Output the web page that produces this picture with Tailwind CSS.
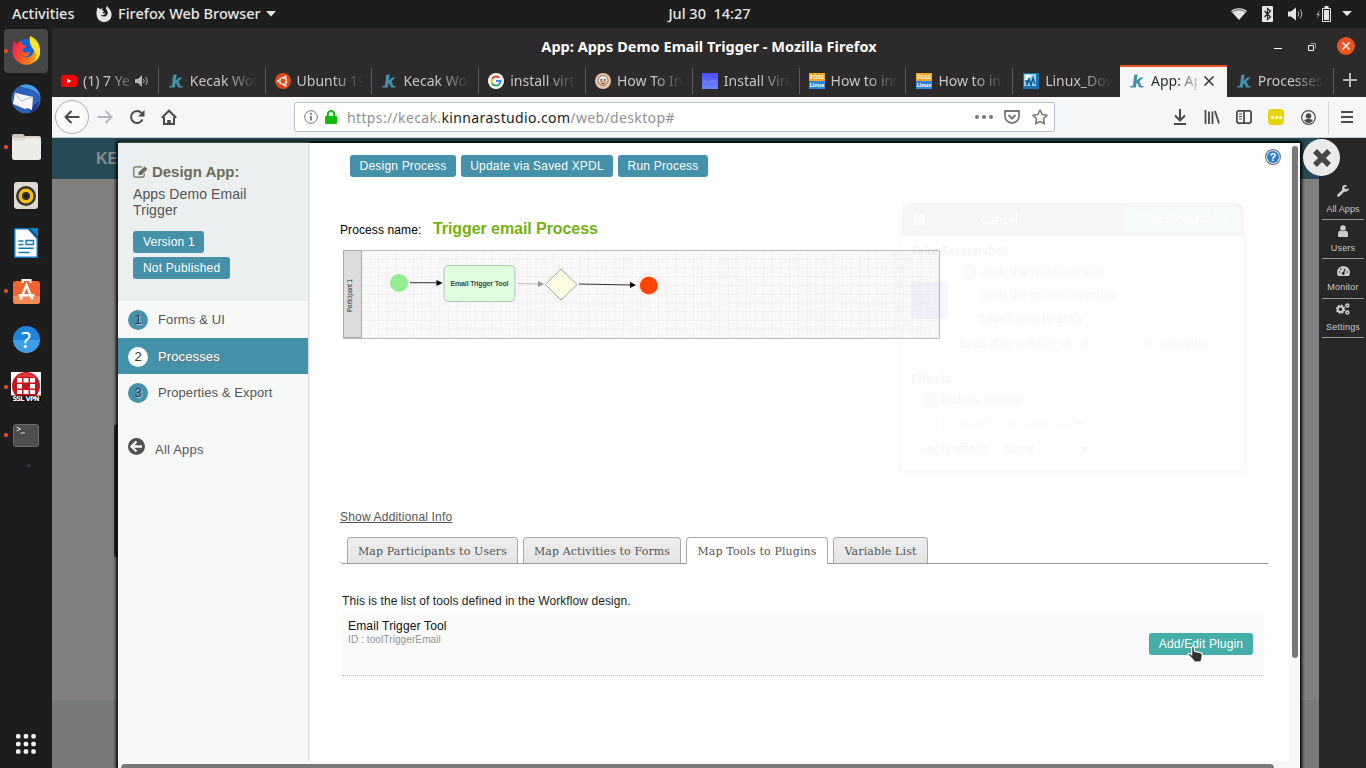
<!DOCTYPE html>
<html lang="en">
<head>
<meta charset="utf-8">
<title>App: Apps Demo Email Trigger</title>
<script src="https://cdn.jsdelivr.net/npm/@tailwindcss/browser@4"></script>
</head>
<body class="w-[1366px] h-[768px] overflow-hidden bg-[#1d1d1d] font-['Noto_Sans',sans-serif] flex flex-col">
<svg class="hidden">
  <symbol id="k" viewBox="0 0 14 14"><path fill="#4591a9" d="M4.200 1 7.800.2 6.600 6.400 10.200 3.400h3.400L9.500 7.300l2 4.700H13.500v1.500H9.300L7 9l-.6.500-.4 4H0l.3-1.200 2.700-.8z"/></symbol>
  <symbol id="foss" viewBox="0 0 16 16"><path fill="#fba51c" d="M0 0h16v8H0z"/><path fill="#2a86e0" d="M0 8h16v8H0z"/><text x="8" y="6.200" font-size="5.500" font-weight="700" fill="#fff" text-anchor="middle" font-family="Noto Sans">FOSS</text><text x="8" y="14" font-size="5.500" font-weight="700" fill="#fff" text-anchor="middle" font-family="Noto Sans">Linux</text></symbol>
</svg>

<!-- Desktop top bar -->
<header class="h-[27px] shrink-0 grid grid-cols-[1fr_auto_1fr] items-center text-[#e6e6e6] text-[14.5px] leading-[26px] font-medium">
  <div class="flex items-center pl-3">
    <span class="w-[64px] pb-px">Activities</span>
    <svg class="ml-5 w-4 h-4" viewBox="0 0 16 16"><path fill="#e6e6e6" d="M1.500 1.500 4 3c1-.6 2-.7 3-.5C5.800 3.200 6 4 6.200 4.500l2 .4c-.3 1-1.200 1.200-1.700 1.700.4 1 2 1.200 3 .4-.5 2-3 2.800-4.800 1.500 1.300 3 6.300 2.800 7-1 .4-2.500-1-3.500-1.500-4.500-.3-1 .2-2.200 1-3C12 1.800 15.600 4 15.600 8.400a7.500 7.500 0 0 1-15 .4C.3 6 .8 3.500 1.500 1.500Z"/></svg>
    <span class="ml-[6px] w-[143px] whitespace-nowrap pb-px">Firefox Web Browser</span>
    <svg class="ml-[5px] w-[10px] h-[6px]" viewBox="0 0 10 6"><path fill="#e6e6e6" d="M0 0h10L5 5.500z"/></svg>
  </div>
  <div class="text-center whitespace-pre pl-[53px] pb-px">Jul 30  14:27</div>
  <div class="flex items-center justify-end pr-[14px]">
    <svg class="w-4 h-3" viewBox="0 0 16 12"><path fill="#e6e6e6" d="M0 3C4-.8 12-.8 16 3L8 12z"/><path d="M1.200 4C5 1.200 11 1.200 14.800 4" stroke="#555" fill="none"/></svg>
    <svg class="ml-[15px] w-[11px] h-4" viewBox="0 0 11 16"><rect width="11" height="16" rx="1" fill="#e6e6e6"/><path d="m2.500 5 6 6-3 2.500v-11l3 2.500-6 6" stroke="#222" fill="none" stroke-width="1.200"/></svg>
    <svg class="ml-[15px] w-4 h-4" viewBox="0 0 16 16"><path fill="#e6e6e6" d="M0 5.500h3L8 1.500v13l-5-4H0z"/><path d="M10 5.500q1.700 2.500 0 5M12.200 3.500q3.200 4.500 0 9" stroke="#bbb" fill="none"/></svg>
    <svg class="ml-3 w-[15px] h-4" viewBox="0 0 15 16"><path fill="#999" d="M4 4 0 9h2l-1 4 3-5H2.500z"/><path fill="none" stroke="#e6e6e6" d="M6.500 2.500h8v13h-8z"/><path fill="#e6e6e6" d="M8.500 0h4v2h-4zM8 4h5v10H8z"/></svg>
    <svg class="ml-[11px] w-[10px] h-[5px]" viewBox="0 0 10 5"><path fill="#e6e6e6" d="M0 0h10L5 5z"/></svg>
  </div>
</header>

<div class="flex flex-1 min-h-0">
<!-- Dock -->
<nav class="w-[52px] shrink-0 flex flex-col">
  <div class="h-12 flex items-center"><i class="w-1 h-1 ml-1 rounded-full bg-[#e95420] relative z-10"></i><span class="-ml-1 w-11 h-11 rounded bg-[#464646] flex items-center justify-center"><svg class="w-7 h-[30px]" viewBox="0 0 28 30"><defs><linearGradient id="fx" x1="0" y1=".3" x2="1" y2=".7"><stop stop-color="#f3195e"/><stop offset=".5" stop-color="#ff5a22"/><stop offset="1" stop-color="#ffb214"/></linearGradient></defs><circle cx="14" cy="13" r="10" fill="#0b63d8"/><path fill="url(#fx)" d="M3 4c0 2 1 3 2 4 1-2 3-3 5-3-1 3 1 4 4 5-1 3-3 2-4 4 1 3 6 4 8 1 0 4-4 7-8 5 6 4 13-1 12-8L18 1c6 3 10 8 10 15a13.800 13.800 0 0 1-27.500 0C0 11 1 7 3 4Z"/><path fill="#ffe52e" d="M18 0c8 3 11 11 10 18-1 4-3 6-6 8 3-5 2-10-1-13-3-4-4-8-3-13Z"/></svg></span></div>
  <div class="h-12 flex items-center justify-center"><svg class="w-[30px] h-[30px]" viewBox="0 0 30 30"><circle cx="15" cy="15" r="14.500" fill="#2b62b8"/><path fill="#4b9ee6" d="M9 2c7-4 19 0 20.500 11C24 4 16 5 9 2Z"/><path fill="#24348c" d="m18 29 5-8 5-4c-1 6-5 11-10 12Z"/><path fill="#f7f7f8" d="M4 8.500 9 10l13 3-1 13-4-2-3 1-12-5z"/><path fill="none" stroke="#b8bcc8" d="m4 9 6 8 11-4"/></svg></div>
  <div class="h-12 flex items-center"><i class="w-1 h-1 ml-1 rounded-full bg-[#e95420]"></i><svg class="ml-1 w-[29px] h-[26px]" viewBox="0 0 29 26"><path fill="#cbc6ba" d="M0 2q0-2 2-2h9l2 2h13q3 0 3 2v6H0z"/><rect y="4" width="29" height="22" rx="2.500" fill="#eeece8"/><path fill="#dedad0" d="M1 4.500h10l3-2h14v2H14l-3 2H1z"/></svg></div>
  <div class="h-12 flex items-center justify-center"><svg class="w-6 h-[27px]" viewBox="0 0 24 27"><rect width="24" height="27" rx="3" fill="#dedad0"/><circle cx="12" cy="14" r="10" fill="#33332f"/><circle cx="12" cy="14" r="7.500" fill="#f1bd16"/><circle cx="12" cy="14" r="4" fill="#2f2f2f"/><circle cx="12" cy="14" r="1.500" fill="#111"/></svg></div>
  <div class="h-12 flex items-center justify-center"><svg class="w-6 h-[30px]" viewBox="0 0 24 30"><path fill="#0d79bc" d="M0 1q0-1 1-1h13l10 10v19q0 1-1 1H1q-1 0-1-1z"/><path fill="#fff" d="M1.500 1.500H14L22.500 11v17.500h-21z"/><path fill="#0f83c9" d="M15 0h9v9z"/><path stroke="#0d79bc" stroke-width="1.400" fill="none" d="M4.500 13h5M4.500 16.500h5M4.500 20.200h15M4.500 24.500h11M12 12.500h7.500v4H12z"/></svg></div>
  <div class="h-12 flex items-center"><i class="w-1 h-1 ml-1 rounded-full bg-[#e95420]"></i><svg class="ml-[5px] w-[27px] h-[25px]" viewBox="0 0 27 25"><rect y="2" width="27" height="23" rx="3" fill="#f1642e"/><path fill="#f58a57" d="M0 17h27v5q0 3-3 3H3q-3 0-3-3z"/><path fill="none" stroke="#fff" stroke-width="2" d="M9.500 4V1h8v3"/><path fill="none" stroke="#fff" stroke-width="2.400" d="m7.500 20.500 6-14.500 6 14.500"/><path stroke="#fff" stroke-width="2.400" d="M5.500 16.200h16"/></svg></div>
  <div class="h-12 flex items-center justify-center"><span class="w-[27px] h-[27px] rounded-full bg-linear-to-b from-[#1f84db] from-50% to-[#3f9ee8] to-50% text-white text-[22px] leading-[27px] text-center">?</span></div>
  <div class="h-12 flex items-center"><i class="w-1 h-1 ml-1 rounded-full bg-[#e95420]"></i><svg class="ml-[3px] w-[30px] h-[30px]" viewBox="0 0 30 30"><path fill="#fff" d="M0 0h30v30H0z"/><circle cx="15" cy="14" r="14" fill="#c4141c"/><path fill="#e8343a" d="M4 6q11-10 22 0-11-2-22 0Z"/><g fill="#fff"><rect x="6" y="6" width="5" height="4.500"/><rect x="12.500" y="6" width="5" height="4.500"/><rect x="19" y="6" width="5" height="4.500"/><rect x="6" y="12" width="5" height="4.500"/><rect x="19" y="12" width="5" height="4.500"/><rect x="6" y="18" width="5" height="4"/><rect x="12.500" y="18" width="5" height="4"/><rect x="19" y="18" width="5" height="4"/></g><path fill="#1a1010" d="M0 23.500h30V30H0z"/><text x="15" y="29" fill="#fff" font-size="6.500" font-weight="700" text-anchor="middle" textLength="27" font-family="DejaVu Sans">SSL VPN</text></svg></div>
  <div class="h-12 flex items-center"><i class="w-1 h-1 ml-1 rounded-full bg-[#e95420]"></i><svg class="ml-[5px] w-[26px] h-[23px]" viewBox="0 0 26 23"><rect x=".5" y=".5" width="25" height="22" rx="2.500" fill="#4d4d4d" stroke="#6a6a6a"/><path d="m3.500 3 4 2-4 2M7.500 9H12" stroke="#ddd" fill="none"/></svg></div>
  <div class="pl-[27px] pt-[5px]"><i class="block w-1 h-[3px] bg-[#2b3046]"></i></div>
  <svg class="mt-auto mb-[14px] ml-4 w-5 h-5" viewBox="0 0 20 20" fill="#f2f2f2"><rect x="0" y="0" width="4.500" height="4.500" rx="1.500"/><rect x="7.700" y="0" width="4.500" height="4.500" rx="1.500"/><rect x="15.300" y="0" width="4.500" height="4.500" rx="1.500"/><rect x="0" y="7.700" width="4.500" height="4.500" rx="1.500"/><rect x="7.700" y="7.700" width="4.500" height="4.500" rx="1.500"/><rect x="15.300" y="7.700" width="4.500" height="4.500" rx="1.500"/><rect x="0" y="15.300" width="4.500" height="4.500" rx="1.500"/><rect x="7.700" y="15.300" width="4.500" height="4.500" rx="1.500"/><rect x="15.300" y="15.300" width="4.500" height="4.500" rx="1.500"/></svg>
</nav>

<!-- Browser window -->
<section class="flex-1 min-w-0 flex flex-col bg-[#2c2a2b] mt-px">
  <div class="h-[37px] shrink-0 relative flex items-center justify-end pr-[11px]">
    <b class="absolute inset-x-0 top-[7px] leading-[22px] text-center text-white text-[14.5px] font-bold tracking-[0.02px]">App: Apps Demo Email Trigger - Mozilla Firefox</b>
    <i class="w-2 h-px bg-white mt-[3px]"></i>
    <svg class="ml-[26px] w-2 h-2" viewBox="0 0 8 8" fill="none"><path stroke="#fff" d="M.5 2.500h5v5h-5z"/><path stroke="#999" d="M2.500.5h5v5"/></svg>
    <span class="ml-[21px] mb-px w-[18px] h-[18px] rounded-full bg-[#e95420] flex items-center justify-center"><svg class="w-2 h-2" viewBox="0 0 8 8"><path d="m.5.5 7 7m0-7-7 7" stroke="#fff" stroke-width="1.400"/></svg></span>
  </div>
  <div class="h-8 shrink-0 flex text-[14px] text-[#c6c6c6] leading-8">
    <div class="w-[106.800px] flex items-center pl-[9px] border-r [border-image:linear-gradient(transparent_4px,#5b5a5b_4px,#5b5a5b_28px,transparent_28px)_1]"><svg class="w-4 h-3 shrink-0" viewBox="0 0 16 12"><rect width="16" height="12" rx="3" fill="#f00"/><path fill="#fff" d="m6 3.500 4.500 2.500L6 8.500z"/></svg><span class="ml-[6px] w-[48px] overflow-hidden whitespace-nowrap [mask-image:linear-gradient(to_right,#000_50%,#0004)]">(1) 7 Years</span><svg class="ml-1 w-[14px] h-3 shrink-0" viewBox="0 0 14 12"><path fill="#b5b5b5" d="M0 4h3l4-4v12L3 8H0z"/><path d="M8.500 4q1.500 2 0 4M10.500 2q3.500 4 0 8" stroke="#b5b5b5" fill="none"/></svg></div>
    <div class="w-[106.800px] flex items-center pl-[10px] border-r [border-image:linear-gradient(transparent_4px,#5b5a5b_4px,#5b5a5b_28px,transparent_28px)_1]"><svg class="w-[14px] h-[14px] shrink-0"><use href="#k"/></svg><span class="ml-[7px] w-[66px] overflow-hidden whitespace-nowrap [mask-image:linear-gradient(to_right,#000_55%,transparent)]">Kecak Workflow</span></div>
    <div class="w-[106.800px] flex items-center pl-[9px] border-r [border-image:linear-gradient(transparent_4px,#5b5a5b_4px,#5b5a5b_28px,transparent_28px)_1]"><svg class="w-4 h-4 shrink-0" viewBox="0 0 16 16"><circle cx="8" cy="8" r="8" fill="#dd4814"/><circle cx="8" cy="8" r="3.400" fill="none" stroke="#fff" stroke-width="1.700" stroke-dasharray="6.200 .9"/><g fill="#fff" stroke="#dd4814" stroke-width=".5"><circle cx="3.300" cy="8" r="1.500"/><circle cx="10.400" cy="3.800" r="1.500"/><circle cx="10.400" cy="12.200" r="1.500"/></g></svg><span class="ml-[6px] w-[66px] overflow-hidden whitespace-nowrap [mask-image:linear-gradient(to_right,#000_55%,transparent)]">Ubuntu 19.04</span></div>
    <div class="w-[106.800px] flex items-center pl-[10px] border-r [border-image:linear-gradient(transparent_4px,#5b5a5b_4px,#5b5a5b_28px,transparent_28px)_1]"><svg class="w-[14px] h-[14px] shrink-0"><use href="#k"/></svg><span class="ml-[7px] w-[66px] overflow-hidden whitespace-nowrap [mask-image:linear-gradient(to_right,#000_55%,transparent)]">Kecak Workflow</span></div>
    <div class="w-[106.800px] flex items-center pl-[9px] border-r [border-image:linear-gradient(transparent_4px,#5b5a5b_4px,#5b5a5b_28px,transparent_28px)_1]"><svg class="w-4 h-4 shrink-0" viewBox="0 0 16 16" fill="none" stroke-width="2"><circle cx="8" cy="8" r="8" fill="#fff"/><path stroke="#ea4335" d="M4 5.800A4.500 4.500 0 0 1 11.200 4.800"/><path stroke="#fbbc05" d="M4 5.800a4.500 4.500 0 0 0 0 4.400"/><path stroke="#34a853" d="M4 10.200a4.500 4.500 0 0 0 7 1.200"/><path stroke="#4285f4" d="M8 8h4.500q0 2-1.500 3.400"/></svg><span class="ml-[6px] w-[66px] overflow-hidden whitespace-nowrap [mask-image:linear-gradient(to_right,#000_55%,transparent)]">install virtualbox</span></div>
    <div class="w-[106.800px] flex items-center pl-[9px] border-r [border-image:linear-gradient(transparent_4px,#5b5a5b_4px,#5b5a5b_28px,transparent_28px)_1]"><svg class="w-4 h-4 shrink-0" viewBox="0 0 16 16"><circle cx="8" cy="8" r="8" fill="#e6c4ab"/><circle cx="8" cy="7.500" r="5" fill="#f3e5d6" stroke="#7c7775"/><path fill="#e0a784" d="M4.500 8h7l-1.500 4H6z"/><circle cx="6.300" cy="7" r="1" fill="#405c80"/><circle cx="9.700" cy="7" r="1" fill="#405c80"/><path stroke="#8b5340" d="M6.500 10.500h3"/></svg><span class="ml-[6px] w-[66px] overflow-hidden whitespace-nowrap [mask-image:linear-gradient(to_right,#000_55%,transparent)]">How To Install</span></div>
    <div class="w-[106.800px] flex items-center pl-[9px] border-r [border-image:linear-gradient(transparent_4px,#5b5a5b_4px,#5b5a5b_28px,transparent_28px)_1]"><svg class="w-4 h-4 shrink-0" viewBox="0 0 16 16"><defs><linearGradient id="tc" x2="0" y2="1"><stop stop-color="#4a4cff"/><stop offset="1" stop-color="#6f86ff"/></linearGradient></defs><path fill="url(#tc)" d="M0 0h16v16H0z"/><text x="1.500" y="10" font-size="5" textLength="13" lengthAdjust="spacingAndGlyphs" fill="#9b8fd8" font-family="Liberation Serif">TecRT</text></svg><span class="ml-[6px] w-[66px] overflow-hidden whitespace-nowrap [mask-image:linear-gradient(to_right,#000_55%,transparent)]">Install Virtual</span></div>
    <div class="w-[106.800px] flex items-center pl-[9px] border-r [border-image:linear-gradient(transparent_4px,#5b5a5b_4px,#5b5a5b_28px,transparent_28px)_1]"><svg class="w-4 h-4 shrink-0"><use href="#foss"/></svg><span class="ml-[6px] w-[66px] overflow-hidden whitespace-nowrap [mask-image:linear-gradient(to_right,#000_55%,transparent)]">How to install</span></div>
    <div class="w-[106.800px] flex items-center pl-[10px] border-r [border-image:linear-gradient(transparent_4px,#5b5a5b_4px,#5b5a5b_28px,transparent_28px)_1]"><svg class="w-4 h-4 shrink-0"><use href="#foss"/></svg><span class="ml-[6px] w-[66px] overflow-hidden whitespace-nowrap [mask-image:linear-gradient(to_right,#000_55%,transparent)]">How to install</span></div>
    <div class="w-[106.800px] flex items-center pl-[10px]"><svg class="w-4 h-4 shrink-0" viewBox="0 0 16 16"><rect width="16" height="16" fill="#1b6fae"/><rect x="1" y="1" width="12" height="12" fill="#8fd0ee"/><path fill="#fff" d="M2 2h7L2 9z"/><path stroke="#0f5793" stroke-width="1.500" fill="none" d="M2 8h2v4l2-6 2 6 2-7 2 6"/></svg><span class="ml-[6px] w-[66px] overflow-hidden whitespace-nowrap [mask-image:linear-gradient(to_right,#000_55%,transparent)]">Linux_Downloads</span></div>
    <div class="w-[106.800px] flex items-center pl-[10px] bg-[#f5f6f7] border-t-2 border-[#e95420] text-[#2b2b2b] leading-[28px] pb-[2px]"><svg class="w-[14px] h-[14px] shrink-0"><use href="#k"/></svg><span class="ml-[7px] w-[46px] overflow-hidden whitespace-nowrap [mask-image:linear-gradient(to_right,#000_55%,#0003)]">App: Apps</span><svg class="ml-[7px] w-[10px] h-[10px] shrink-0" viewBox="0 0 10 10"><path d="m.5.5 9 9m0-9-9 9" stroke="#333" stroke-width="1.500"/></svg></div>
    <div class="w-[106.800px] flex items-center pl-[10px] border-r [border-image:linear-gradient(transparent_4px,#5b5a5b_4px,#5b5a5b_28px,transparent_28px)_1]"><svg class="w-[14px] h-[14px] shrink-0"><use href="#k"/></svg><span class="ml-[7px] w-[66px] overflow-hidden whitespace-nowrap [mask-image:linear-gradient(to_right,#000_55%,transparent)]">Processes</span></div>
    <svg class="ml-[9px] mt-2 w-[14px] h-[14px]" viewBox="0 0 14 14"><path d="M7 0v14M0 7h14" stroke="#b8b8b8" stroke-width="2"/></svg>
  </div>
  <div class="h-[41px] shrink-0 flex items-center bg-[#f5f6f7] border-b border-[#c9ccd0] pl-[3px] pr-[13px] text-[#4b4b4b]">
    <span class="w-[34px] h-[34px] rounded-full border border-[#b0b0b3] bg-[#fafafa] flex items-center justify-center"><svg class="w-4 h-[14px]" viewBox="0 0 16 14" fill="none" stroke="#4a4a4a" stroke-width="2"><path d="M15.500 7H1.500M7.500 1l-6 6 6 6"/></svg></span>
    <svg class="ml-2 w-4 h-[14px]" viewBox="0 0 16 14" fill="none" stroke="#b7b7b8" stroke-width="2"><path d="M.5 7h14M8.500 1l6 6-6 6"/></svg>
    <svg class="ml-4 w-4 h-4" viewBox="0 0 16 16" fill="none" stroke="#4a4a4a" stroke-width="2"><path d="M13.500 10.500a6 6 0 1 1-1-6.500"/><path fill="#4a4a4a" stroke="none" d="M15.500 1v6.500H9z"/></svg>
    <svg class="ml-4 w-4 h-4" viewBox="0 0 16 16" fill="none" stroke="#4a4a4a" stroke-width="2"><path d="m.8 8.700 7.200-7 7.200 7M3 8v7h10V8"/><path d="M8 15v-4" stroke-width="3.500"/></svg>
    <div class="ml-[117px] w-[761px] h-[30px] rounded-[3px] border border-[#b9bfc6] bg-white flex items-center pl-[9px] pr-[6px] shrink-0">
      <svg class="w-[14px] h-[14px]" viewBox="0 0 14 14"><circle cx="7" cy="7" r="6.300" fill="none" stroke="#777"/><path d="M7 6v4.500" stroke="#666" stroke-width="1.600"/><circle cx="7" cy="3.800" r="1" fill="#666"/></svg>
      <svg class="ml-[7px] w-3 h-[14px]" viewBox="0 0 12 14"><rect y="6" width="12" height="8" rx="1" fill="#12bc00"/><path d="M2.800 7V4.200a3.200 3.200 0 0 1 6.400 0V7" fill="none" stroke="#12bc00" stroke-width="2"/></svg>
      <span class="ml-[10px] text-[14px] text-[#919191] whitespace-nowrap tracking-[0.36px]">https://kecak.<span class="text-[#222]">kinnarastudio.com</span>/web/desktop#</span>
      <span class="ml-auto flex gap-[2px]"><i class="w-1 h-1 rounded-full bg-[#777] mr-px"></i><i class="w-1 h-1 rounded-full bg-[#777] mr-px"></i><i class="w-1 h-1 rounded-full bg-[#777]"></i></span>
      <svg class="ml-[11px] w-4 h-4" viewBox="0 0 16 16" fill="none" stroke="#777" stroke-width="1.800"><path d="M1 2h14v5a7 7 0 0 1-14 0z"/><path d="m4.500 6 3.500 3.500L11.500 6" stroke-width="2"/></svg>
      <svg class="ml-3 w-4 h-4" viewBox="0 0 16 16" fill="none" stroke="#777" stroke-width="1.600" stroke-linejoin="round"><path d="m8 1 2.100 4.500 4.900.7-3.500 3.500.8 5L8 12.400l-4.300 2.300.8-5L1 6.200l4.900-.7z"/></svg>
    </div>
    <svg class="ml-auto w-3 h-4" viewBox="0 0 12 16" fill="none" stroke="#4a4a4a" stroke-width="2"><path d="M6 0v11M1 6.500l5 5 5-5M0 15h12"/></svg>
    <svg class="ml-[18px] w-4 h-[14px]" viewBox="0 0 16 14" stroke="#4a4a4a" stroke-width="1.800"><path d="M1.500 0v14M5 1.500V14M8.500 1.500V14M11 1l4 12.500"/></svg>
    <svg class="ml-4 w-4 h-[14px]" viewBox="0 0 16 14" fill="none" stroke="#4a4a4a" stroke-width="1.800"><rect x=".9" y=".9" width="14.200" height="12.200" rx="2"/><path d="M8 1v12"/><path d="M3 4h3M3 6.500h3M3 9h3" stroke-width="1"/></svg>
    <span class="ml-4 w-4 h-4 rounded-sm bg-[#e8d200] flex items-center justify-center gap-px"><i class="w-[3px] h-[3px] bg-white"></i><i class="w-[3px] h-[3px] bg-white"></i><i class="w-[3px] h-[3px] bg-white"></i></span>
    <svg class="ml-[17px] w-[15px] h-[15px]" viewBox="0 0 15 15"><circle cx="7.500" cy="7.500" r="6.800" fill="none" stroke="#4a4a4a" stroke-width="1.200"/><circle cx="7.500" cy="6" r="2.800" fill="#4a4a4a"/><path fill="#4a4a4a" d="M3 10q4.500-2 9 0-1.500 3-4.500 3T3 10Z"/></svg>
    <i class="ml-3 h-[33px] w-px bg-[#d5d7da]"></i>
    <svg class="ml-[12px] w-3 h-3" viewBox="0 0 12 12" stroke="#4a4a4a" stroke-width="2"><path d="M0 1h12M0 6h12M0 11h12"/></svg>
  </div>

  <!-- Page behind the dialog -->
  <main class="relative flex-1 min-h-0 flex bg-[#808080] font-['Liberation_Sans',Arial,sans-serif] overflow-hidden">
    <div class="flex-1 flex flex-col">
      <div class="h-[41px] bg-[#264b57] pl-11 pt-[12px] text-[16px] leading-[18px] font-bold text-[#8a8a8a]">KECAK</div>
      <div class="flex-1"></div>
      <div class="h-[68px] bg-[#777a79]"></div>
    </div>
    <aside class="w-[47px] bg-[#272727] pt-[41px] pl-[3px] pr-[2px] flex flex-col text-[9px] text-[#c8c8c8] text-center">
      <div class="h-[41px] flex flex-col items-center pt-[6px] border-b border-[#999]"><svg class="w-3 h-3" viewBox="0 0 12 12"><path d="m1.500 10.500 6-6" stroke="#ccc" stroke-width="2.600" stroke-linecap="round"/><path fill="none" stroke="#ccc" stroke-width="2" d="M9.500 1A2.500 2.500 0 1 0 11 3.500"/></svg><span class="mt-[7px] leading-[10px] tracking-[0.1px]">All Apps</span></div>
      <div class="h-[39px] flex flex-col items-center pt-[5px] border-b border-[#999]"><svg class="w-[10px] h-3" viewBox="0 0 10 12" fill="#ccc"><circle cx="5" cy="3" r="2.800"/><path d="M0 12V9q0-3 2.500-3.500 2.500 1.500 5 0Q10 6 10 9v3z"/></svg><span class="mt-[6px] leading-[10px] tracking-[0.2px]">Users</span></div>
      <div class="h-[40px] flex flex-col items-center pt-[6px] border-b border-[#999]"><svg class="w-[13px] h-[11px]" viewBox="0 0 13 11"><path fill="#ccc" d="M1 11a6.500 6.500 0 1 1 11 0z"/><path d="m6.500 8 1.500-4" stroke="#272727" stroke-width="1.300"/><g fill="#272727"><circle cx="6.200" cy="8.500" r="1.400"/><circle cx="2.500" cy="7" r=".8"/><circle cx="3.800" cy="4" r=".8"/><circle cx="10.500" cy="7" r=".8"/></g></svg><span class="mt-[6px] leading-[10px] tracking-[0.2px]">Monitor</span></div>
      <div class="h-[39px] flex flex-col items-center pt-[4px] border-b border-[#999]"><svg class="w-[14px] h-3" viewBox="0 0 14 12" fill="none" stroke="#ccc"><circle cx="4.500" cy="6.300" r="2.800" stroke-width="2"/><circle cx="4.500" cy="6.300" r="4" stroke-width="1.500" stroke-dasharray="1.600 1.540"/><circle cx="11.300" cy="2.500" r="1.500" stroke-width="1.600"/><circle cx="11.300" cy="9.500" r="1.500" stroke-width="1.600"/></svg><span class="mt-[7px] leading-[10px] tracking-[0.2px]">Settings</span></div>
    </aside>
    <i class="absolute left-[62px] top-[286px] w-2 h-[134px] bg-[#2a2a2a] rounded-l"></i>

    <!-- Dialog -->
    <div class="absolute left-[66px] top-[5px] w-[1182px] h-[625px] flex bg-white shadow-[0_0_3px_2px_#000]">
      <div class="flex-1 flex flex-col min-w-0">
      <div class="flex flex-1 min-h-0">
        <aside class="w-[190px] shrink-0 bg-[#f7f9f9] text-[13px] text-[#555] shadow-[1px_0_2px_#ccc] z-10">
          <div class="h-[158px] bg-[#ebeff0] px-[15px] pt-[20px]">
            <div class="flex items-center h-[17px] text-[#6b6e55]"><svg class="w-[15px] h-3" viewBox="0 0 15 12" fill="none" stroke="#6b6e55" stroke-width="1.200"><path d="M9 .9H2.500Q.8.9.8 2.500v7q0 1.700 1.700 1.700h7q1.700 0 1.700-1.700V7.500"/><path fill="#6b6e55" stroke="none" d="m5.500 6.500 6-6L14.500 3 8.500 9H5.500z"/></svg><b class="ml-1 text-[15px] leading-[17px] tracking-[-0.03px]">Design App:</b></div>
            <p class="mt-[6px] text-[14px] leading-4 tracking-[0.1px] w-[125px]">Apps Demo Email Trigger</p>
            <div class="mt-[13px] flex flex-col items-start gap-1 text-[12px] text-white"><span class="h-[22px] leading-[22px] px-[10px] rounded-[3px] bg-[#4591a9] w-[71px] whitespace-nowrap tracking-[0.2px]">Version 1</span><span class="h-[22px] leading-[22px] px-[10px] rounded-[3px] bg-[#4591a9] w-[97px] whitespace-nowrap tracking-[0.2px]">Not Published</span></div>
          </div>
          <div class="h-[37px] flex items-center pl-[10px]"><span class="w-5 h-5 rounded-full bg-[#4591a9] text-[#333] text-center leading-5 [text-shadow:1px_1px_1px_#cde]">1</span><span class="ml-[10px] tracking-[0.12px]">Forms &amp; UI</span></div>
          <div class="h-[36px] flex items-center pl-[10px] pt-px bg-[#4591a9] text-white"><span class="w-5 h-5 rounded-full bg-white text-[#333] text-center leading-5">2</span><span class="ml-[10px] tracking-[0.12px] [text-shadow:1px_1px_1px_#777]">Processes</span></div>
          <div class="h-[38px] flex items-center pl-[10px]"><span class="w-5 h-5 rounded-full bg-[#4591a9] text-[#333] text-center leading-5 [text-shadow:1px_1px_1px_#cde]">3</span><span class="ml-[10px] tracking-[0.09px]">Properties &amp; Export</span></div>
          <div class="mt-[26px] flex items-start pl-[10px]"><svg class="w-[17px] h-[17px]" viewBox="0 0 17 17"><circle cx="8.500" cy="8.500" r="8.500" fill="#505050"/><path d="M14 8.500H4M8.500 3.500l-5 5 5 5" stroke="#f7f9f9" stroke-width="2.300" fill="none"/></svg><span class="ml-[10px] mt-[4px] leading-[15px] tracking-[0.22px]">All Apps</span></div>
        </aside>
        <div class="flex-1 min-w-0 pl-8 pt-3 relative">
          <div class="flex items-start text-[12px] text-white pl-[10px] tracking-[0.2px] whitespace-nowrap">
            <span class="h-[22px] leading-[22px] w-[106px] text-center rounded-[3px] bg-[#4591a9]">Design Process</span>
            <span class="ml-[5px] h-[22px] leading-[22px] w-[152px] text-center rounded-[3px] bg-[#4591a9]">Update via Saved XPDL</span>
            <span class="ml-[5px] h-[22px] leading-[22px] w-[90px] text-center rounded-[3px] bg-[#4591a9]">Run Process</span>
            <svg class="ml-auto mr-[8px] -mt-[6px] w-4 h-4" viewBox="0 0 16 16"><circle cx="8" cy="8" r="7.400" fill="#fff" stroke="#777" stroke-width="1.200"/><circle cx="8" cy="8" r="6" fill="#2f7dd3"/><text x="8" y="12" text-anchor="middle" fill="#fff" font-size="11" font-weight="700" font-family="Liberation Sans">?</text></svg>
          </div>
          <div class="mt-[42px] h-[20px] flex items-baseline"><span class="text-[12px] text-black tracking-[0.1px] w-[93px]">Process name:</span><b class="text-[16px] leading-5 text-[#74b111] tracking-[-0.07px]">Trigger email Process</b></div>
          <svg class="mt-[11px] ml-[3px] w-[597px] h-[89px]" viewBox="0 0 597 89" font-family="Liberation Sans">
            <defs><pattern id="grid" width="8.750" height="8.750" patternUnits="userSpaceOnUse"><path d="M0 .5h8.750M.5 0v8.750" stroke="#ececec" stroke-dasharray="1.200 1.500" fill="none"/></pattern></defs>
            <path fill="#f8f8f8" d="M0 0h597v89H0z"/><path fill="url(#grid)" d="M19 0h578v89H19z"/>
            <path fill="none" stroke="#bcbcbc" d="M.5.5h596v88H.5z"/><path fill="#dcdcdc" stroke="#aaa" d="M.5.5h18v87H.5z"/>
            <text transform="translate(9 62) rotate(-90)" font-size="6.500" textLength="33" fill="#333">Participant 1</text>
            <circle cx="56" cy="33" r="9" fill="#90ee90"/>
            <path d="M67 32.700h27" stroke="#333"/><path d="m93.500 30 6 3-6 3z"/>
            <rect x="101" y="15.500" width="71" height="36" rx="4" fill="#e0fddf" stroke="#b5c4b5"/>
            <text x="107.500" y="36" font-size="7" font-weight="700" textLength="58" fill="#3c4a3c">Email Trigger Tool</text>
            <path d="m175 33.500 20 .5" stroke="#bbb"/><path fill="#999" d="m195 31 6 3-6 3z"/>
            <path fill="#fdfde2" stroke="#aaa" d="M218 19 234 34.500 218 50 202.500 34.500z"/>
            <path d="m236 34 52 1" stroke="#333"/><path d="m287 32 6 3-6 3z"/>
            <circle cx="306" cy="35" r="11" fill="#fff" stroke="#ffe3da"/><circle cx="305.800" cy="35.500" r="9" fill="#ff4500"/>
          </svg>
          <div class="mt-[171px] leading-[14px] text-[12px] text-[#555] underline tracking-[0.18px]">Show Additional Info</div>
          <div class="mt-[13px] h-[27px] w-[928px] pl-[7px] flex gap-[5px] text-[11px] leading-[27px] tracking-[0.13px] text-[#555] font-['DejaVu_Serif',serif] border-b border-[#999] rounded-bl-[4px] text-center whitespace-nowrap">
            <span class="h-[26px] w-[171px] rounded-t border border-b-0 border-[#aaa] bg-linear-to-b from-[#eee] to-[#e4e4e4]">Map Participants to Users</span>
            <span class="h-[26px] w-[158px] rounded-t border border-b-0 border-[#aaa] bg-linear-to-b from-[#eee] to-[#e4e4e4]">Map Activities to Forms</span>
            <span class="h-[27px] w-[142px] rounded-t border border-b-0 border-[#aaa] bg-white">Map Tools to Plugins</span>
            <span class="h-[26px] w-[95px] rounded-t border border-b-0 border-[#aaa] bg-linear-to-b from-[#eee] to-[#e4e4e4]">Variable List</span>
          </div>
          <p class="mt-[30px] ml-[2px] text-[12px] leading-[14px] text-[#222] tracking-[0.07px]">This is the list of tools defined in the Workflow design.</p>
          <div class="mt-[5px] ml-[2px] w-[922px] h-[63px] bg-[#fafafa] border-b border-dotted border-[#bbb] flex justify-between pl-[6px] pr-[11px] pt-[6px]">
            <div><div class="text-[12px] leading-[14px] text-[#111] tracking-[0.16px]">Email Trigger Tool</div><div class="mt-px text-[10px] leading-3 text-[#919191] tracking-[0.1px]">ID : toolTriggerEmail</div></div>
            <span class="mt-[14px] h-[22px] leading-[22px] w-[104px] text-center rounded-[3px] bg-[#45aea8] text-white text-[12px] tracking-[0.15px]">Add/Edit Plugin</span>
          </div>

          <!-- Fading screenshot dialog -->
          <div class="absolute left-[594px] top-[60px] w-[342px] h-[267px] rounded-t-lg bg-white opacity-[0.035] shadow-[0_2px_10px_3px_#777] text-[12px] tracking-[-0.2px] text-black font-['Noto_Sans',sans-serif] flex flex-col whitespace-nowrap">
            <div class="h-[33px] bg-[#111] rounded-t-lg flex items-center pl-3 pr-1 text-white font-medium"><i class="w-[11px] h-[11px] bg-[#7af]"></i><span class="ml-[56px]">Cancel</span><span class="ml-auto w-[117px] h-[25px] leading-[24px] text-center bg-[#3a4] rounded">Take Screenshot</span></div>
            <div class="pl-[9px] pt-[5px] leading-5 flex-1">
              <b class="tracking-normal">Take Screenshot</b>
              <div class="flex"><i class="mt-[21px] w-[37px] h-[37px] rounded bg-[#24e]"></i><div class="ml-[14px]"><div class="flex items-center h-[22px] gap-1"><i class="w-[14px] h-[14px] rounded-full border-4 border-[#3a4]"></i>Grab the whole screen</div><div class="flex items-center h-6 gap-1"><i class="w-[14px] h-[14px] rounded-full border border-[#ccc]"></i>Grab the current window</div><div class="flex items-center h-6 gap-1"><i class="w-[14px] h-[14px] rounded-full border border-[#ccc]"></i>Select area to grab</div></div></div>
              <div class="flex items-center h-[26px] pl-12 gap-[5px]">Grab after a delay of<span class="w-[82px] h-6 border border-[#ccc] rounded flex justify-between px-[6px]"><span>0</span><span>−</span><span>+</span></span>seconds</div>
              <b class="block mt-[12px] tracking-normal">Effects</b>
              <div class="flex items-center h-[22px] pl-3 gap-1"><i class="w-[14px] h-[14px] rounded-sm bg-[#3a4]"></i>Include pointer</div>
              <div class="flex items-center h-6 pl-3 gap-1 opacity-50"><i class="w-[14px] h-[14px] rounded-sm bg-[#aaa]"></i>Include the window border</div>
              <div class="flex items-center h-7 pl-[9px] gap-[10px]">Apply effect:<span class="w-[98px] h-6 border border-[#ccc] rounded px-[6px] flex justify-between leading-[22px]"><span>None</span><span>▾</span></span></div>
            </div>
          </div>
          <!-- Hand pointer -->
          <svg class="absolute left-[879px] top-[502px] w-[17px] h-[18px]" viewBox="0 0 17 18"><path fill="#333" stroke="#fff" stroke-width="1.200" stroke-linejoin="round" d="M4.700 2q1.300-1.700 2.300 0l.6 4.500 6 1.200q1.700.5 1.700 2.500 0 3.500-1.500 6.600l-6 .2Q5 13.500 1 9.700q.2-1.700 2-1.200l1.700 1.300z"/></svg>
        </div>
      </div>
      <div class="h-[7px] shrink-0 bg-[#f6f7f7] pl-[3px] pt-[3px] relative z-20"><i class="block w-[1153px] h-1 rounded-t bg-[#777a79]"></i></div>
      </div>
      <div class="w-[11px] shrink-0 bg-[#f6f7f7] pl-[3px] pt-[3px]"><i class="block w-[6px] h-[512px] rounded-full bg-[#777a79]"></i></div>
    </div>
    <span class="absolute left-[1251px] top-px w-[37px] h-[37px] rounded-full bg-[#ebebeb] flex items-center justify-center"><svg class="w-5 h-5" viewBox="0 0 20 20"><path d="m3 3 14 14m0-14L3 17" stroke="#474747" stroke-width="5.500" stroke-linecap="round" class="[stroke-linecap:butt]"/></svg></span>
  </main>
</section>
</div>
</body>
</html>
